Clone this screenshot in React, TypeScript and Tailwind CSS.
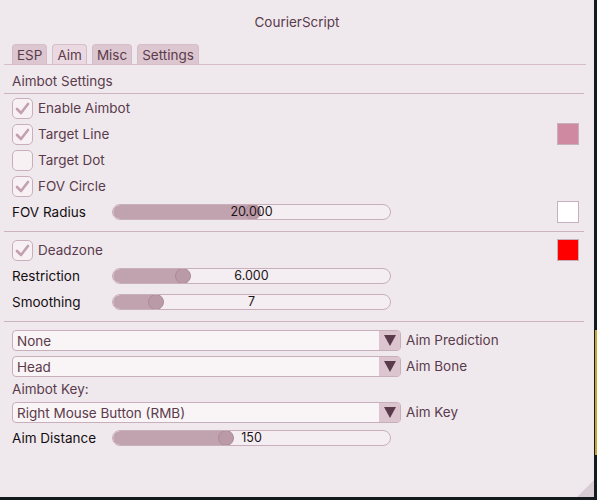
import React from "react";

const font = { fontFamily: "Inter, 'Noto Sans', sans-serif" };

function Check({ on }: { on: boolean }) {
  return (
    <div className="w-[21px] h-[21px] rounded-[5px] border border-[#c9aebb] bg-[#f7f1f4] flex items-center justify-center shrink-0">
      {on && (
        <svg width="17" height="17" viewBox="0 0 17 17">
          <polyline
            points="3,9 7,13 14,4"
            fill="none"
            stroke="#c39fb0"
            strokeWidth="2.6"
            strokeLinecap="round"
            strokeLinejoin="round"
          />
        </svg>
      )}
    </div>
  );
}

function Swatch({ color }: { color: string }) {
  return (
    <div
      className={`ml-auto mr-[3px] w-[22px] h-[22px] border border-[#c9aebb] ${color}`}
    />
  );
}

function CheckRow({
  label,
  on,
  swatch,
}: {
  label: string;
  on: boolean;
  swatch?: string;
}) {
  return (
    <div className="h-[26px] flex items-center">
      <Check on={on} />
      <span className="ml-[5px] pt-px text-[13.5px] text-[#5b3b4b]">{label}</span>
      {swatch && <Swatch color={swatch} />}
    </div>
  );
}

function Slider({
  label,
  value,
  pos,
  swatch,
}: {
  label: string;
  value: string;
  pos: number;
  swatch?: string;
}) {
  const thumb = 8 + pos * 263;
  return (
    <div className="h-[26px] flex items-center">
      <span className="w-[100px] pt-px text-[13.5px] text-[#140e11]">
        {label}
      </span>
      <div className="relative w-[279px] h-[16px] rounded-full border border-[#c9aebb] bg-[#f4eef2] overflow-hidden">
        <div
          className="absolute left-0 top-0 h-full bg-[#c1a2af] rounded-l-full"
          style={{ width: thumb }}
        />
        <div
          className="absolute top-[-1px] w-[16px] h-[16px] rounded-full bg-[#bb9aa7] border border-[#ab8b99]"
          style={{ left: thumb - 8 }}
        />
        <span className="absolute inset-0 pt-px flex items-center justify-center text-[12.5px] text-[#1c1519] leading-none">
          {value}
        </span>
      </div>
      {swatch && <Swatch color={swatch} />}
    </div>
  );
}

function Combo({ text, label }: { text: string; label: string }) {
  return (
    <div className="h-[26px] flex items-center">
      <div className="w-[389px] h-[21px] flex rounded-[4px] border border-[#c9aebb] bg-[#f9f4f6] overflow-hidden">
        <span className="flex-1 pl-[4px] text-[13.5px] leading-[20px] text-[#5b3b4b]">
          {text}
        </span>
        <div className="w-[21px] h-full bg-[#dcc5cf] flex items-center justify-center">
          <svg width="12" height="11" viewBox="0 0 12 11">
            <polygon points="0,0 12,0 6,11" fill="#5b3b4b" />
          </svg>
        </div>
      </div>
      <span className="ml-[5px] pt-px text-[13.5px] text-[#5b3b4b]">{label}</span>
    </div>
  );
}

function Sep() {
  return <div className="h-px bg-[#cdb3c0] -ml-[8px] -mr-[2px]" />;
}

export default function App() {
  const tabs = ["ESP", "Aim", "Misc", "Settings"];
  return (
    <div className="w-[597px] h-[500px] bg-[#141b1e] relative" style={font}>
      <div className="absolute right-0 top-[330px] w-[2px] h-[125px] bg-[#c6a532]" />
      <div className="relative w-[594px] h-[497px] bg-[#efe9ee] px-[4px]">
        <div className="h-[44px] pt-px flex items-center justify-center text-[13.5px] text-[#5b3b4b]">
          CourierScript
        </div>
        <div className="flex gap-[5px] px-[8px] h-[20px] items-end">
          {tabs.map((t) => (
            <div
              key={t}
              className={`h-[20px] px-[4px] rounded-t-[4px] border border-b-0 border-[#d6bdc9] text-[13.5px] leading-[20px] text-[#5b3b4b] ${
                t === "Aim" ? "bg-[#ead9e1]" : "bg-[#dcc6d0]"
              }`}
            >
              {t}
            </div>
          ))}
        </div>
        <div className="h-px bg-[#d9bcc9] mr-[4px]" />
        <div className="px-[8px]">
          <div className="h-[28px] pt-[4px] flex items-center text-[13.5px] text-[#5b3b4b]">
            Aimbot Settings
          </div>
          <Sep />
          <div className="h-px" />
          <CheckRow label="Enable Aimbot" on />
          <CheckRow label="Target Line" on swatch="bg-[#cf8aa1]" />
          <CheckRow label="Target Dot" on={false} />
          <CheckRow label="FOV Circle" on />
          <Slider label="FOV Radius" value="20.000" pos={0.5} swatch="bg-white" />
          <div className="h-[6px]" />
          <Sep />
          <div className="h-[5px]" />
          <CheckRow label="Deadzone" on swatch="bg-[#ff0000]" />
          <Slider label="Restriction" value="6.000" pos={0.237} />
          <Slider label="Smoothing" value="7" pos={0.134} />
          <div className="h-[6px]" />
          <Sep />
          <div className="h-[5px]" />
          <Combo text="None" label="Aim Prediction" />
          <Combo text="Head" label="Aim Bone" />
          <div className="h-[20px] pt-px flex items-center text-[13.5px] text-[#5b3b4b]">
            Aimbot Key:
          </div>
          <Combo text="Right Mouse Button (RMB)" label="Aim Key" />
          <Slider label="Aim Distance" value="150" pos={0.4} />
        </div>
        <svg
          className="absolute right-0 bottom-0"
          width="17"
          height="17"
          viewBox="0 0 17 17"
        >
          <polygon points="17,0 17,17 0,17" fill="#d9cdd5" />
        </svg>
      </div>
    </div>
  );
}
